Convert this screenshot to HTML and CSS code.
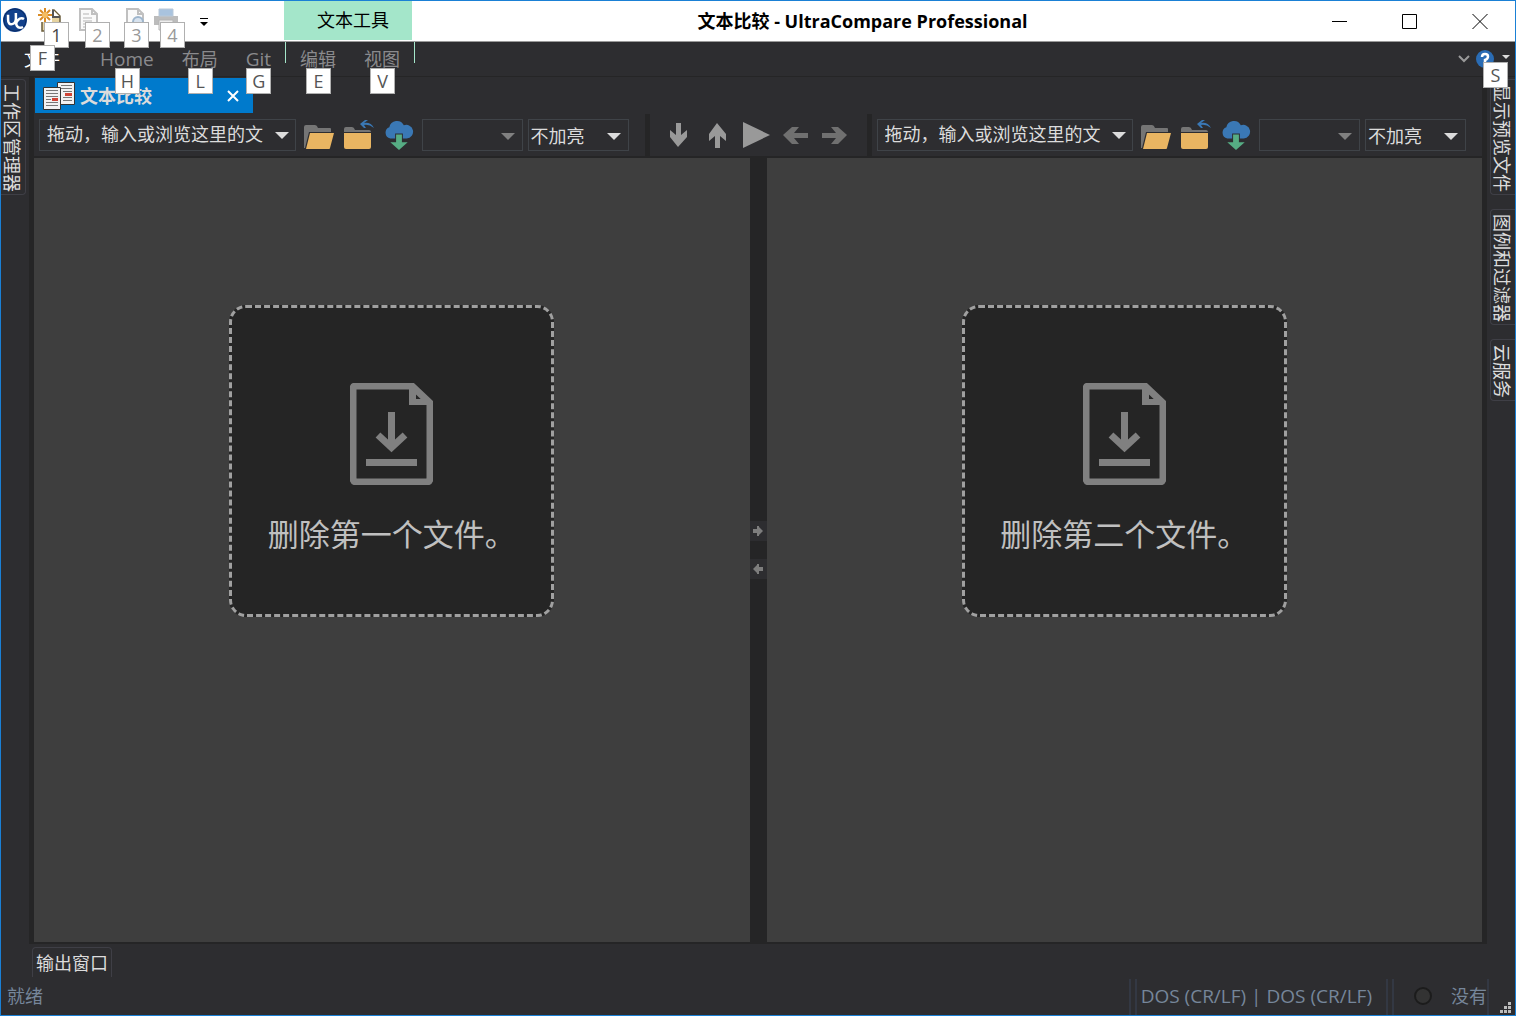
FILE: index.html
```html
<!DOCTYPE html>
<html lang="zh-CN">
<head>
<meta charset="utf-8">
<title>文本比较 - UltraCompare Professional</title>
<link rel="stylesheet" href="styles.css">
</head>
<body>
<svg class="sprite" aria-hidden="true">
  <symbol id="i-caret" viewBox="0 0 14 7"><path d="M0 0h14L7 7z" fill="currentColor"/></symbol>
  <symbol id="i-open" viewBox="0 0 30 30">
    <path d="M0 7q0-2 2-2h9q2 0 3 3h12q1 0 1 1v3H5L1 28H0z" fill="#757575"/>
    <path d="M6 13h24l-4 15q0 1-1 1H2z" fill="#e9b562"/>
  </symbol>
  <symbol id="i-back" viewBox="0 0 30 30">
    <path d="M0 12V9q0-2 2-2h6q2 0 3 3h14q2 0 2 2z" fill="#757575"/>
    <path d="M0 13h27v14q0 2-2 2H2q-2 0-2-2z" fill="#e9b562"/>
    <path d="M16 4l5-4h3l-4 3q7-1 10 5-5-4-10-3l2 3h-2z" fill="#3a78b5"/>
  </symbol>
  <symbol id="i-cloud" viewBox="0 0 30 31">
    <path d="M6 19a6 6 0 0 1-1-11.500A8 8 0 0 1 20 5.500a7 7 0 1 1 3 13.500z" fill="#3a78b5"/>
    <path d="M11 14h8v7h6L15 31 5 21h6z" fill="#2d2d30"/>
    <path d="M12 15h6v8h6l-9 8-9-8h6z" fill="#56ad84"/>
  </symbol>
  <symbol id="i-file" viewBox="0 0 83 102">
    <path d="M6 3h56l18 17v75q0 4-4 4H7q-4 0-4-4V6q0-3 3-3z" fill="none" stroke="#808080" stroke-width="7"/>
    <path d="M59 2h6l18 17v3H59zM66 10v6h6z" fill="#808080" fill-rule="evenodd"/>
    <path d="M41.500 29v36M28 52l13.500 12.500L55 52" fill="none" stroke="#808080" stroke-width="7"/>
    <path d="M16 76h51v7H16z" fill="#808080"/>
  </symbol>
</svg>

<div class="window">
  <header class="titlebar">
    <div class="quick">
      <svg class="logo" viewBox="0 0 24 24" aria-hidden="true">
        <circle cx="12" cy="12" r="12" fill="#12418c"/><circle cx="12" cy="12" r="11" fill="none" stroke="#0a2c66"/>
        <path d="M6 6l-1 5q-1 5 3 5t5-5l1-5" fill="none" stroke="#fff" stroke-width="2.500" transform="rotate(-12 9 11)"/>
        <path d="M21 11q-3-2-6 1t-1 6 6 1" fill="none" stroke="#fff" stroke-width="2.500"/>
      </svg>
      <button class="tool tool-new" aria-label="新建">
        <svg viewBox="0 0 24 24"><path d="M4 2h12l6 6v15H4z" fill="#e6d3a0" stroke="#6b5d3c" stroke-width="1.500"/><path d="M15 2v7h7" fill="#fff" stroke="#555" stroke-width="2"/><path d="M0 0h14v14H0z" fill="#fff"/><path d="M7 0v14M0 7h14M2 2l10 10M12 2L2 12" stroke="#d98b25" stroke-width="2"/><circle cx="7" cy="7" r="3" fill="#f4bd63"/></svg>
        <kbd class="key">1</kbd></button>
      <button class="tool tool-copy" aria-label="打开" disabled>
        <svg viewBox="0 0 24 24"><path d="M1 1h12l5 5v16H1zM13 1v5h5" fill="#fafafa" stroke="#c0c0c0" stroke-width="2"/><path d="M4 6h6M4 10h9M4 13h9M4 16h9M4 19h9" stroke="#b5b5b5"/></svg>
        <kbd class="key">2</kbd></button>
      <button class="tool tool-find" aria-label="预览" disabled>
        <svg viewBox="0 0 24 24"><path d="M3 1h11l5 5v16H3zM14 1v5h5" fill="#fafafa" stroke="#c0c0c0" stroke-width="2"/><circle cx="14" cy="14" r="5" fill="#d7e2ee" stroke="#9db5cc" stroke-width="2"/></svg>
        <kbd class="key">3</kbd></button>
      <button class="tool tool-print" aria-label="打印" disabled>
        <svg viewBox="0 0 24 24"><path d="M0 8h24v9H0z" fill="#bcbcbc"/><path d="M5 1h14v7H5z" fill="#a9c3de" stroke="#b9c9d9"/><path d="M5 12h14v10H5z" fill="#eee" stroke="#b5b5b5"/></svg>
        <kbd class="key">4</kbd></button>
      <button class="more" aria-label="自定义快速访问工具栏"><svg viewBox="0 0 8 9"><path d="M0 0h8v1H0zM0 4h8L4 8z" fill="#000"/></svg></button>
    </div>
    <div class="context-title">文本工具</div>
    <h1 class="title">文本比较 - UltraCompare Professional</h1>
    <div class="controls">
      <button aria-label="最小化"><svg viewBox="0 0 16 16"><path d="M0 8.500h15" stroke="#000"/></svg></button>
      <button aria-label="最大化"><svg viewBox="0 0 16 16"><path d="M.5 1.500h14v14H.5z" fill="none" stroke="#000"/></svg></button>
      <button aria-label="关闭"><svg viewBox="0 0 16 16"><path d="M.5 1l15 15M15.500 1l-15 15" stroke="#000"/></svg></button>
    </div>
  </header>

  <nav class="menubar">
    <a class="menu menu-file" href="#file">文件<kbd class="key key-high">F</kbd></a>
    <a class="menu latin" href="#home">Home<kbd class="key">H</kbd></a>
    <a class="menu" href="#layout">布局<kbd class="key">L</kbd></a>
    <a class="menu latin" href="#git">Git<kbd class="key">G</kbd></a>
    <div class="context-menu">
      <a class="menu" href="#edit">编辑<kbd class="key">E</kbd></a>
      <a class="menu" href="#view">视图<kbd class="key">V</kbd></a>
    </div>
    <div class="help">
      <button aria-label="折叠功能区"><svg class="chevron" viewBox="0 0 12 8"><path d="M1 1l5 5 5-5" fill="none" stroke="#9a9a9a" stroke-width="2"/></svg></button>
      <button class="help-button" aria-label="帮助"><svg class="question" viewBox="0 0 18 18"><circle cx="9" cy="9" r="9" fill="#2a6cb4"/><path d="M6 7q0-3 3-3t3 2.500-3 3.500v2M9 13v2" fill="none" stroke="#fff" stroke-width="2.500"/></svg>
        <svg class="help-caret"><use href="#i-caret"/></svg><kbd class="key key-help">S</kbd></button>
    </div>
  </nav>

  <div class="body">
    <aside class="dock dock-left"><button class="side-tab">工作区管理器</button></aside>
    <main class="workspace">
      <div class="tabs">
        <div class="tab">
          <svg class="tab-icon" viewBox="0 0 32 28"><path d="M14.500.5h17v22h-17z" fill="#f2f2f2" stroke="#333"/><path d="M18 3.500h11M18 6.500h11M20 9.500h9M20 15.500h9M20 18.500h9" stroke="#777"/><path d="M22 11h7v3h-7z" fill="#cf4436"/><path d="M.5 5.500h17v22H.5z" fill="#f2f2f2" stroke="#333"/><path d="M3 8.500h12M3 11.500h12M3 14.500h12M3 17.500h5M3 20.500h12M3 23.500h12" stroke="#777"/><path d="M9 16h6v3H9z" fill="#cf4436"/></svg>
          <span>文本比较</span>
          <button class="tab-close" aria-label="关闭标签"><svg viewBox="0 0 12 12"><path d="M1 1l10 10M11 1L1 11" stroke="#fff" stroke-width="2"/></svg></button>
        </div>
      </div>
      <div class="toolbars">
        <div class="toolbar">
          <div class="path"><input type="text" aria-label="第一个文件" value="拖动，输入或浏览这里的文"><button aria-label="最近的文件"><svg class="caret"><use href="#i-caret"/></svg></button></div>
          <div class="file-tools">
            <button aria-label="打开文件"><svg><use href="#i-open"/></svg></button>
            <button aria-label="打开上级"><svg><use href="#i-back"/></svg></button>
            <button aria-label="云端下载"><svg><use href="#i-cloud"/></svg></button>
          </div>
          <div class="choices">
            <label class="choice"><select aria-label="编码" disabled><option></option></select><svg class="caret"><use href="#i-caret"/></svg></label>
            <label class="choice"><select aria-label="加亮"><option>不加亮</option></select><svg class="caret"><use href="#i-caret"/></svg></label>
          </div>
        </div>
        <div class="navigation">
          <button aria-label="下一处"><svg viewBox="0 0 28 28"><path d="M12 2h5v12l6-5v7l-9 10-8-10V9l6 5z" fill="#999"/></svg></button>
          <button aria-label="上一处"><svg viewBox="0 0 28 28"><path d="M12 27h5V15l6 5v-7L14 2 6 13v7l6-5z" fill="#999"/></svg></button>
          <button aria-label="比较"><svg viewBox="0 0 28 28"><path d="M1 1l27 13L1 27z" fill="#999"/></svg></button>
          <button aria-label="向左合并"><svg viewBox="0 0 28 28"><path d="M27 12v5H13l5 6h-7l-9-9 9-8h7l-5 6z" fill="#707070"/></svg></button>
          <button aria-label="向右合并"><svg viewBox="0 0 28 28"><path d="M2 12v5h14l-5 6h7l9-9-9-8h-7l5 6z" fill="#707070"/></svg></button>
        </div>
        <div class="toolbar">
          <div class="path"><input type="text" aria-label="第二个文件" value="拖动，输入或浏览这里的文"><button aria-label="最近的文件"><svg class="caret"><use href="#i-caret"/></svg></button></div>
          <div class="file-tools">
            <button aria-label="打开文件"><svg><use href="#i-open"/></svg></button>
            <button aria-label="打开上级"><svg><use href="#i-back"/></svg></button>
            <button aria-label="云端下载"><svg><use href="#i-cloud"/></svg></button>
          </div>
          <div class="choices">
            <label class="choice"><select aria-label="编码" disabled><option></option></select><svg class="caret"><use href="#i-caret"/></svg></label>
            <label class="choice"><select aria-label="加亮"><option>不加亮</option></select><svg class="caret"><use href="#i-caret"/></svg></label>
          </div>
        </div>
      </div>
      <div class="panes">
        <section class="pane"><div class="drop"><svg><use href="#i-file"/></svg><p>删除第一个文件。</p></div></section>
        <div class="splitter">
          <button aria-label="复制到右侧"><svg viewBox="0 0 10 10"><path d="M0 3h4V0h2v1l4 4-4 4v1H4V7H0z" fill="#7d7d7d"/></svg></button>
          <button aria-label="复制到左侧"><svg viewBox="0 0 10 10"><path d="M10 3H6V0H4v1L0 5l4 4v1h2V7h4z" fill="#7d7d7d"/></svg></button>
        </div>
        <section class="pane"><div class="drop"><svg><use href="#i-file"/></svg><p>删除第二个文件。</p></div></section>
      </div>
    </main>
    <aside class="dock dock-right">
      <button class="side-tab">显示预览文件</button>
      <button class="side-tab">图例和过滤器</button>
      <button class="side-tab">云服务</button>
    </aside>
  </div>

  <div class="output"><button class="output-tab">输出窗口</button></div>
  <footer class="status">
    <span class="ready">就绪</span>
    <span class="sep"></span><span class="sep"></span>
    <span class="format latin">DOS (CR/LF) | DOS (CR/LF)</span>
    <span class="sep"></span><span class="sep"></span>
    <span class="dot"></span><span>没有</span><span class="sep sep-end"></span>
    <svg class="grip" viewBox="0 0 11 11"><path d="M8 0h3v3H8zM4 4h3v3H4zM8 4h3v3H8zM0 8h3v3H0zM4 8h3v3H4zM8 8h3v3H8z" fill="#bbb"/></svg>
  </footer>
</div>
</body>
</html>
```
FILE: styles.css
```css
* { box-sizing: border-box; }
body {
  margin: 0;
  font: 400 18px/24px "Open Sans", "Noto Sans CJK SC", sans-serif;
  color: #dcdcdc;
  background: #2d2d30;
}
button, input, select {
  margin: 0;
  padding: 0;
  border: 0;
  border-radius: 0;
  background: none;
  color: inherit;
  font: inherit;
}
svg { display: block; flex: none; overflow: visible; }
.sprite { position: absolute; width: 0; height: 0; }
.latin { font-size: 19px; }

.window {
  display: flex;
  flex-direction: column;
  min-height: 100vh;
  border: 1px solid #1a80d5;
}

/* Title bar */
.titlebar {
  display: flex;
  height: 41px;
  border-bottom: 1px solid #999;
  background: #fff;
  color: #000;
}
.quick { display: flex; align-items: flex-start; width: 283px; padding: 7px 2px; }
.logo { width: 24px; height: 24px; }
.tool { position: relative; width: 24px; height: 24px; color: #444; }
.tool:disabled { color: #999; }
.tool svg { width: 24px; height: 24px; }
.tool-new { margin-left: 11px; }
.tool-copy { margin-left: 17px; }
.tool-find { margin-left: 21px; }
.tool-print { margin-left: 6px; }
.more { margin: 10px 0 0 22px; }
.more svg { width: 8px; height: 9px; }
.context-title { width: 128px; height: 39px; padding: 7px 0 0 10px; background: #a4e6ca; text-align: center; }
.title { flex: 1; margin: 0; padding: 8px 0 0 8px; font-size: 18px; line-height: 24px; font-weight: 700; text-align: center; }
.controls { display: flex; }
.controls button { display: grid; place-items: center; width: 70px; }
.controls svg { width: 16px; height: 16px; }

/* Keyboard hints */
.key {
  position: absolute;
  z-index: 2;
  top: 26px;
  left: calc(50% - 12px);
  width: 25px;
  height: 26px;
  border: 1px solid #b0b0b0;
  background: #fff;
  color: #555;
  font: inherit;
  font-size: 18px;
  text-align: center;
}
.tool .key { top: 14px; left: 6px; color: inherit; }
.tool-find .key { left: 0; }

/* Menu */
.menubar { display: flex; height: 35px; padding-left: 9px; border-bottom: 1px solid #252526; }
.menu { position: relative; padding: 5px 14px; color: #8a8a8d; text-decoration: none; }
.menu-file { margin-right: 12px; color: #fff; }
.key-high { top: 3px; }
.context-menu { display: flex; height: 21px; border: solid #a4e6ca; border-width: 0 1px; }
.help { display: flex; align-items: flex-start; gap: 6px; margin-left: auto; padding: 8px 5px 0 0; }
.chevron { width: 12px; height: 8px; margin-top: 5px; }
.help-button { position: relative; display: flex; gap: 8px; }
.question { width: 18px; height: 18px; }
.help-caret { width: 8px; height: 4px; margin-top: 5px; }
.key-help { top: 12px; left: 7px; }

/* Side docks */
.body { display: flex; flex: 1; }
.dock { display: flex; flex-direction: column; align-items: flex-start; gap: 14px; width: 28px; padding-top: 2px; }
.dock-right { align-items: flex-end; }
.side-tab {
  width: 25px;
  padding: 4px 2px 2px 0;
  border: 1px solid #3f3f46;
  border-left: 0;
  border-radius: 0 4px 4px 0;
  line-height: 20px;
  text-align: start;
  writing-mode: vertical-rl;
  text-orientation: sideways;
}
.dock-right .side-tab { border-left: 1px solid #3f3f46; border-right: 0; border-radius: 4px 0 0 4px; }

/* Workspace */
.workspace {
  display: flex;
  flex: 1;
  flex-direction: column;
  min-width: 0;
  border: solid #252526;
  border-width: 0 5px 2px;
}
.tabs { display: flex; height: 37px; padding: 1px 0 1px 1px; background: #2d2d30; }
.tab { display: flex; align-items: center; width: 218px; padding: 0 14px 0 8px; background: #007acc; font-weight: 700; }
.tab-icon { width: 32px; height: 28px; margin-right: 5px; }
.tab-close { margin-left: auto; }
.tab-close svg { width: 12px; height: 12px; }
.toolbars { display: flex; gap: 5px; border-bottom: 2px solid #252526; background: #252526; }
.toolbar, .navigation { display: flex; align-items: center; height: 42px; background: #2d2d30; }
.toolbar { flex: 1; min-width: 0; padding: 0 16px 0 5px; }
.path, .choice { display: flex; position: relative; height: 32px; border: 1px solid #3f4348; }
.path { flex: 1; min-width: 0; }
.path input { flex: 1; width: 0; min-width: 0; padding: 0 0 2px 7px; }
.path button { width: 28px; padding-left: 8px; }
.caret { width: 14px; height: 7px; color: #dcdcdc; }
.file-tools { display: flex; gap: 10px; margin: 0 8px; }
.file-tools svg { width: 30px; height: 30px; }
.choices { display: flex; gap: 5px; }
.choice { width: 101px; }
.choice select { width: 100%; padding: 1px 24px 0 2px; appearance: none; opacity: 1; }
.choice .caret { position: absolute; top: 13px; right: 7px; pointer-events: none; }
.choice select:disabled + .caret { color: #808080; }
.navigation { justify-content: center; gap: 11px; width: 217px; padding-right: 4px; }
.navigation svg { width: 28px; height: 28px; }
.panes { display: flex; flex: 1; }
.pane { flex: 1; padding: 147px 16px 16px; background: #3e3e3e; }
.drop {
  display: flex;
  flex-direction: column;
  align-items: center;
  gap: 26px;
  max-width: 325px;
  height: 312px;
  margin: 0 auto;
  padding-top: 75px;
  border: 3px dashed #a0a0a0;
  border-radius: 17px;
  background: #252525;
  color: #c0c0c0;
  font-size: 31px;
  line-height: 46px;
}
.drop svg { width: 83px; height: 102px; }
.drop p { margin: 0; white-space: nowrap; }
.splitter { display: flex; flex-direction: column; justify-content: center; gap: 18px; width: 17px; background: #252526; }
.splitter button { display: grid; place-items: center; width: 17px; height: 20px; background: #2d2d30; }
.splitter svg { width: 10px; height: 10px; }

/* Output and status */
.output { padding: 3px 0 0 31px; }
.output-tab { display: block; height: 30px; padding: 0 3px; border: 1px solid #3f3f46; border-bottom: 0; border-radius: 4px 4px 0 0; }
.status { display: flex; align-items: center; height: 38px; padding: 0 4px 0 6px; color: #76869a; }
.ready { margin-right: auto; }
.sep { align-self: flex-end; width: 2px; height: 36px; margin-right: 4px; background: #333843; }
.format { margin-right: 14px; }
.dot { width: 18px; height: 18px; margin: 0 19px 0 16px; border: 2px solid #1c1c1c; border-radius: 50%; background: #333; }
.sep-end { margin-right: 11px; }
.grip { align-self: flex-end; width: 11px; height: 11px; margin-bottom: 2px; }
```
